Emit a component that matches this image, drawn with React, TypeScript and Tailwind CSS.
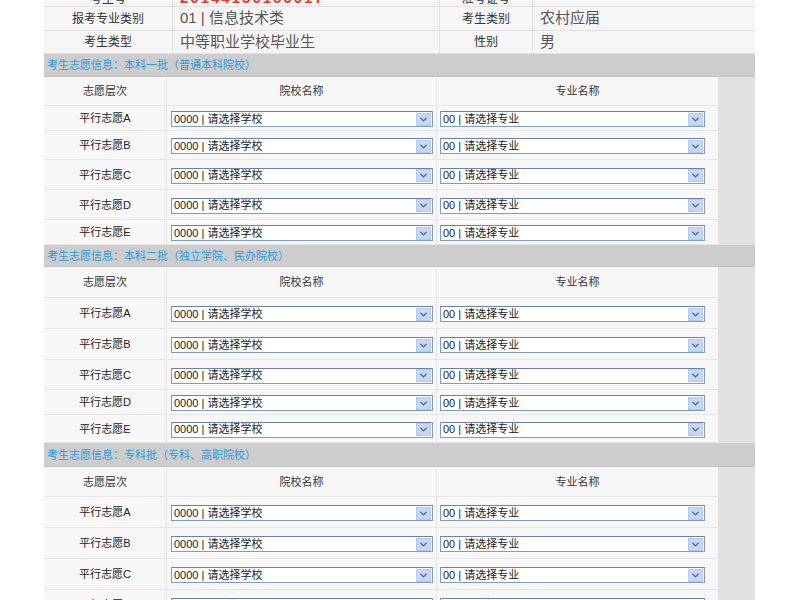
import { ChevronDown } from 'lucide-react';

const font = { fontFamily: '"Liberation Sans", "Noto Sans CJK SC", sans-serif' };

type Section = {
  title: string;
  headerH: number;
  titleH: number;
  rows: { name: string; h: number }[];
};

const sections: Section[] = [
  {
    title: '考生志愿信息：本科一批（普通本科院校）',
    titleH: 23,
    headerH: 29,
    rows: [
      { name: '平行志愿A', h: 25 },
      { name: '平行志愿B', h: 29 },
      { name: '平行志愿C', h: 30 },
      { name: '平行志愿D', h: 30 },
      { name: '平行志愿E', h: 25 },
    ],
  },
  {
    title: '考生志愿信息：本科二批（独立学院、民办院校）',
    titleH: 22,
    headerH: 31,
    rows: [
      { name: '平行志愿A', h: 31 },
      { name: '平行志愿B', h: 31 },
      { name: '平行志愿C', h: 30 },
      { name: '平行志愿D', h: 25 },
      { name: '平行志愿E', h: 28 },
    ],
  },
  {
    title: '考生志愿信息：专科批（专科、高职院校）',
    titleH: 24,
    headerH: 30,
    rows: [
      { name: '平行志愿A', h: 31 },
      { name: '平行志愿B', h: 31 },
      { name: '平行志愿C', h: 31 },
      { name: '平行志愿D', h: 31 },
    ],
  },
];

function FakeSelect({ text }: { text: string }) {
  return (
    <div className="flex h-[16px] w-full items-center border border-[#7f9db9] border-t-[#6a84a0] bg-white pl-[2px] pr-[1px]">
      <span className="flex-1 text-[11px] leading-none text-[#222]">{text}</span>
      <span className="flex h-[13px] w-[15px] items-center justify-center border border-[#b4c8f0] bg-[#c5d6fa]">
        <ChevronDown size={11} strokeWidth={3} className="text-[#4d6185]" />
      </span>
    </div>
  );
}

function InfoRow({ cells, h, red }: { cells: string[]; h: number; red?: boolean }) {
  const align = red ? 'items-end leading-none pb-[1px]' : 'items-center';
  return (
    <div
      className="grid grid-cols-[129px_267px_93px_222px] border-b border-[#e2e2e2] bg-[#f5f5f5]"
      style={{ height: h }}
    >
      <div className={`flex ${align} justify-center border-r border-[#e2e2e2] text-[12px] text-[#333]`}>
        {cells[0]}
      </div>
      <div
        className={`flex ${align} border-r border-[#e2e2e2] pl-[7px] text-[15px] ${red ? 'font-bold tracking-[2px] text-[#e23b2e]' : 'text-[#555]'}`}
      >
        {cells[1]}
      </div>
      <div className={`flex ${align} justify-center border-r border-[#e2e2e2] text-[12px] text-[#333]`}>
        {cells[2]}
      </div>
      <div className={`flex ${align} pl-[7px] text-[15px] text-[#555]`}>{cells[3]}</div>
    </div>
  );
}

function Choices({ section }: { section: Section }) {
  return (
    <div>
      <div
        className="flex items-center border-b border-[#c4c4c4] bg-[#cdcdcd] pl-[3px] pt-[1px] text-[11px] text-[#2d9be0]"
        style={{ height: section.titleH }}
      >
        {section.title}
      </div>
      <div className="flex">
        <div className="w-[674px] bg-[#f7f7f7]">
          <div
            className="grid grid-cols-[123px_270px_281px] border-b border-[#e6e6e6] pt-[1px]"
            style={{ height: section.headerH }}
          >
            <div className="flex items-center justify-center border-r border-[#e6e6e6] text-[11px] text-[#333]">
              志愿层次
            </div>
            <div className="flex items-center justify-center border-r border-[#e6e6e6] text-[11px] text-[#333]">
              院校名称
            </div>
            <div className="flex items-center justify-center text-[11px] text-[#333]">专业名称</div>
          </div>
          {section.rows.map((r) => (
            <div
              key={r.name}
              className="grid grid-cols-[123px_270px_281px] border-b border-[#e6e6e6]"
              style={{ height: r.h }}
            >
              <div className="flex items-center justify-center border-r border-[#e6e6e6] pt-[1px] text-[11px] text-[#222]">
                {r.name}
              </div>
              <div className="flex items-center border-r border-[#e6e6e6] pl-[4px] pr-[3px] pt-[2px]">
                <FakeSelect text="0000 | 请选择学校" />
              </div>
              <div className="flex items-center pl-[3px] pr-[13px] pt-[2px]">
                <FakeSelect text="00 | 请选择专业" />
              </div>
            </div>
          ))}
        </div>
        <div className="w-[37px] bg-[#e2e2e2]" />
      </div>
    </div>
  );
}

export default function App() {
  return (
    <div className="h-[600px] w-[800px] overflow-hidden bg-white" style={font}>
      <div className="ml-[44px] -mt-[21px] w-[711px]">
        <InfoRow h={28} red cells={['考生号', '20144130150017', '准考证号', '']} />
        <InfoRow h={24} cells={['报考专业类别', '01 | 信息技术类', '考生类别', '农村应届']} />
        <InfoRow h={23} cells={['考生类型', '中等职业学校毕业生', '性别', '男']} />
        {sections.map((s) => (
          <Choices key={s.title} section={s} />
        ))}
      </div>
    </div>
  );
}
